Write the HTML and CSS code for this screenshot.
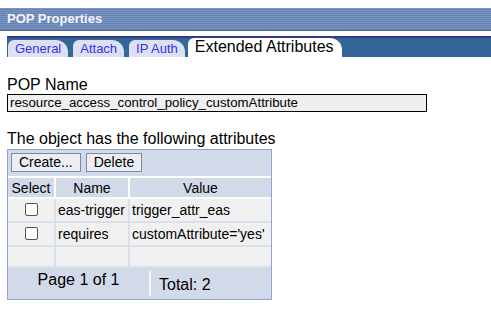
FILE: index.html
```html
<!DOCTYPE html>
<html lang="en">
<head>
    <meta charset="UTF-8">
    <title>POP Properties</title>
    <link rel="stylesheet" href="styles.css">
</head>
<body>
    <div class="titlebar">POP Properties</div>

    <div class="tabs">
        <a href="#" class="tab">General</a>
        <a href="#" class="tab">Attach</a>
        <a href="#" class="tab">IP Auth</a>
        <a href="#" class="tab active">Extended Attributes</a>
    </div>

    <div class="form">
        <label class="field-label">POP Name</label>
        <div class="field-value">resource_access_control_policy_customAttribute</div>

        <p class="caption">The object has the following attributes</p>

        <div class="grid">
            <div class="toolbar">
                <button class="btn">Create...</button>
                <button class="btn">Delete</button>
            </div>
            <table>
                <tr>
                    <th class="col-select">Select</th>
                    <th class="col-name">Name</th>
                    <th>Value</th>
                </tr>
                <tr>
                    <td class="center"><span class="check"></span></td>
                    <td>eas-trigger</td>
                    <td>trigger_attr_eas</td>
                </tr>
                <tr>
                    <td class="center"><span class="check"></span></td>
                    <td>requires</td>
                    <td>customAttribute='yes'</td>
                </tr>
                <tr class="empty">
                    <td></td>
                    <td></td>
                    <td></td>
                </tr>
            </table>
            <div class="pager">
                <span class="page">Page 1 of 1</span>
                <span class="total">Total: 2</span>
            </div>
        </div>
    </div>
</body>
</html>
```

FILE: styles.css
```css
body {
    margin: 0;
    padding: 8px 0 0 0;
    font-family: "Liberation Sans", Arial, sans-serif;
    background: #fff;
    color: #000;
}

.titlebar {
    height: 22px;
    line-height: 22px;
    padding-left: 7px;
    font-size: 13px;
    font-weight: bold;
    color: #f4f6fb;
    background: repeating-linear-gradient(#7b94c2 0, #7b94c2 1px, #6783b6 1px, #6783b6 2px);
    border-bottom: 1px solid #4d6596;
}

.tabs {
    margin: 5px 0 0 7px;
    height: 19px;
    padding: 0 0 0 1px;
    background: #336699;
    border-top: 2px solid #333a80;
    display: flex;
    align-items: flex-end;
    gap: 5px;
}

.tab {
    display: block;
    height: 17px;
    line-height: 18px;
    padding: 0 7px;
    font-size: 13px;
    color: #3333ee;
    background: #dde0f0;
    text-decoration: none;
    border-radius: 6px 12px 0 0;
}

.tab.active {
    height: 19px;
    line-height: 18px;
    margin-left: -2px;
    font-size: 16px;
    color: #000;
    background: #fff;
    padding: 0 8px 0 7px;
}

.form {
    padding: 19px 0 0 7px;
}

.field-label {
    display: block;
    font-size: 16px;
    line-height: 18px;
}

.field-value {
    width: 416px;
    height: 16px;
    line-height: 16px;
    padding-left: 2px;
    font-size: 13.25px;
    background: #efefef;
    border: 1px solid #000;
}

.caption {
    margin: 18px 0 1px 0;
    font-size: 16px;
    line-height: 18px;
}

.grid {
    width: 263px;
    border: 1px solid #8ea5cf;
    background: #d2daea;
}

.toolbar {
    display: flex;
    gap: 5px;
    padding: 3px 3px 4px 3px;
}

.btn {
    font-family: inherit;
    font-size: 14px;
    height: 19px;
    line-height: 17px;
    padding: 0 7px;
    color: #000;
    background: #eceef4;
    border: 1px solid #7d8aa3;
    border-radius: 0;
}

table {
    width: 100%;
    border-collapse: collapse;
    font-size: 14px;
}

th, td {
    border: 2px solid #d2daea;
    height: 22px;
    padding: 0 2px;
    white-space: nowrap;
}

tr > :first-child {
    border-left: 0;
}

tr > :last-child {
    border-right: 0;
}

th {
    height: 19px;
    font-weight: normal;
    background: #d2daea;
    border-color: #fff;
}

td {
    background: #f0f0f0;
    border-color: #d8e0ee;
}

.col-select {
    width: 42px;
}

.col-name {
    width: 68px;
}

.center {
    text-align: center;
}

.check {
    display: inline-block;
    width: 11px;
    height: 11px;
    border: 1px solid #555;
    border-radius: 2px;
    background: #fff;
    vertical-align: -1px;
}

.empty td {
    height: 19px;
}

.pager {
    display: flex;
    height: 31px;
    font-size: 16px;
}

.page {
    width: 141px;
    text-align: center;
    padding-top: 0;
    border-right: 2px solid #f4f6fb;
    margin: 3px 0 3px 0;
}

.total {
    padding: 8px 0 0 8px;
}
```
